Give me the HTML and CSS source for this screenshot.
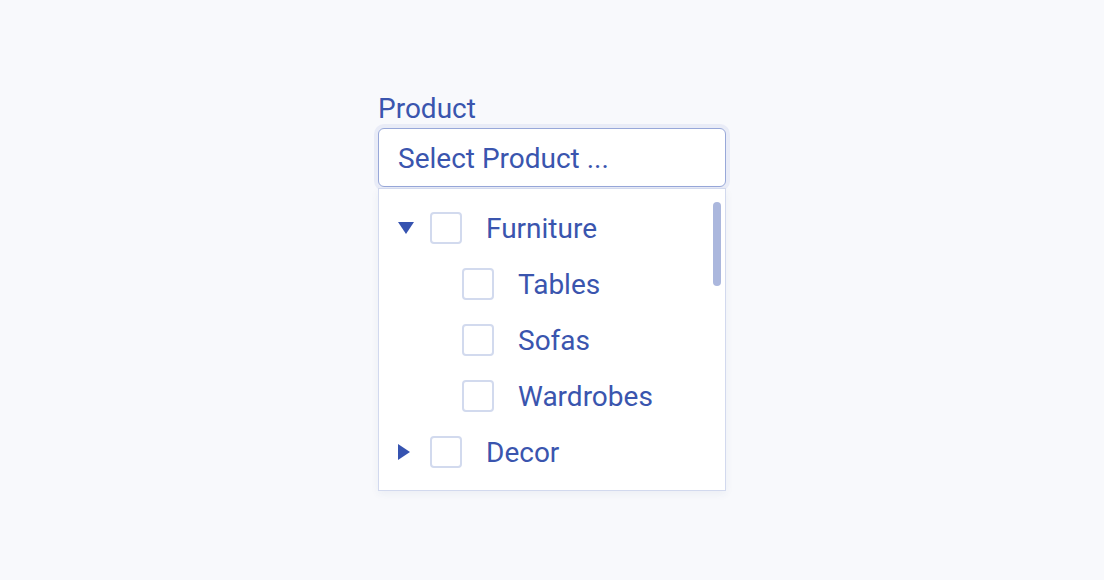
FILE: index.html
```html
<!DOCTYPE html>
<html lang="en">
<head>
<meta charset="utf-8">
<title>Product select</title>
<link rel="stylesheet" href="styles.css">
</head>
<body>
<div class="field">
  <label class="label">Product</label>
  <div class="input">Select Product ...</div>
  <div class="panel">
    <ul class="tree">
      <li class="row">
        <span class="toggle"><svg width="16" height="12" viewBox="0 0 16 12"><path d="M0 0H16L8 12Z" fill="#3653b0"/></svg></span>
        <span class="check"></span>
        <span class="text">Furniture</span>
      </li>
      <li class="row child">
        <span class="check"></span>
        <span class="text">Tables</span>
      </li>
      <li class="row child">
        <span class="check"></span>
        <span class="text">Sofas</span>
      </li>
      <li class="row child">
        <span class="check"></span>
        <span class="text">Wardrobes</span>
      </li>
      <li class="row">
        <span class="toggle"><svg width="12" height="16" viewBox="0 0 12 16"><path d="M0 0L12 8L0 16Z" fill="#3653b0"/></svg></span>
        <span class="check"></span>
        <span class="text">Decor</span>
      </li>
    </ul>
    <div class="scrollbar"></div>
  </div>
</div>
</body>
</html>
```

FILE: styles.css
```css
html, body {
  margin: 0;
  padding: 0;
}
body {
  background: #f8f9fc;
  font-family: Roboto, "Liberation Sans", sans-serif;
  color: #3a55ae;
  height: 580px;
}
.field {
  width: 348px;
  margin: 0 auto;
  padding-top: 93px;
}
.label {
  display: block;
  font-size: 28px;
  line-height: 32px;
  margin-bottom: 3px;
}
.input {
  box-sizing: border-box;
  height: 59px;
  border: 1.5px solid #98a8d9;
  border-radius: 6px;
  background: #fff;
  box-shadow: 0 0 0 4px #e9ecf7;
  font-size: 28px;
  line-height: 60px;
  padding-left: 19px;
}
.panel {
  position: relative;
  box-sizing: border-box;
  margin-top: 1px;
  height: 303px;
  background: #fff;
  border: 1.5px solid #d2d9ee;
  box-shadow: 0 3px 8px rgba(40, 60, 120, 0.06);
}
.tree {
  list-style: none;
  margin: 0;
  padding: 11px 0 0 19px;
}
.row {
  display: flex;
  align-items: center;
  height: 56px;
}
.toggle {
  width: 24px;
  margin-right: 8px;
  display: flex;
  align-items: center;
}
.row.child {
  padding-left: 64px;
}
.check {
  box-sizing: border-box;
  width: 32px;
  height: 32px;
  border: 2px solid #d2daee;
  border-radius: 4px;
  margin-right: 24px;
  flex: none;
}
.text {
  font-size: 28px;
}
.scrollbar {
  position: absolute;
  top: 13px;
  right: 4px;
  width: 8px;
  height: 84px;
  border-radius: 4px;
  background: #abb7dd;
}
```
